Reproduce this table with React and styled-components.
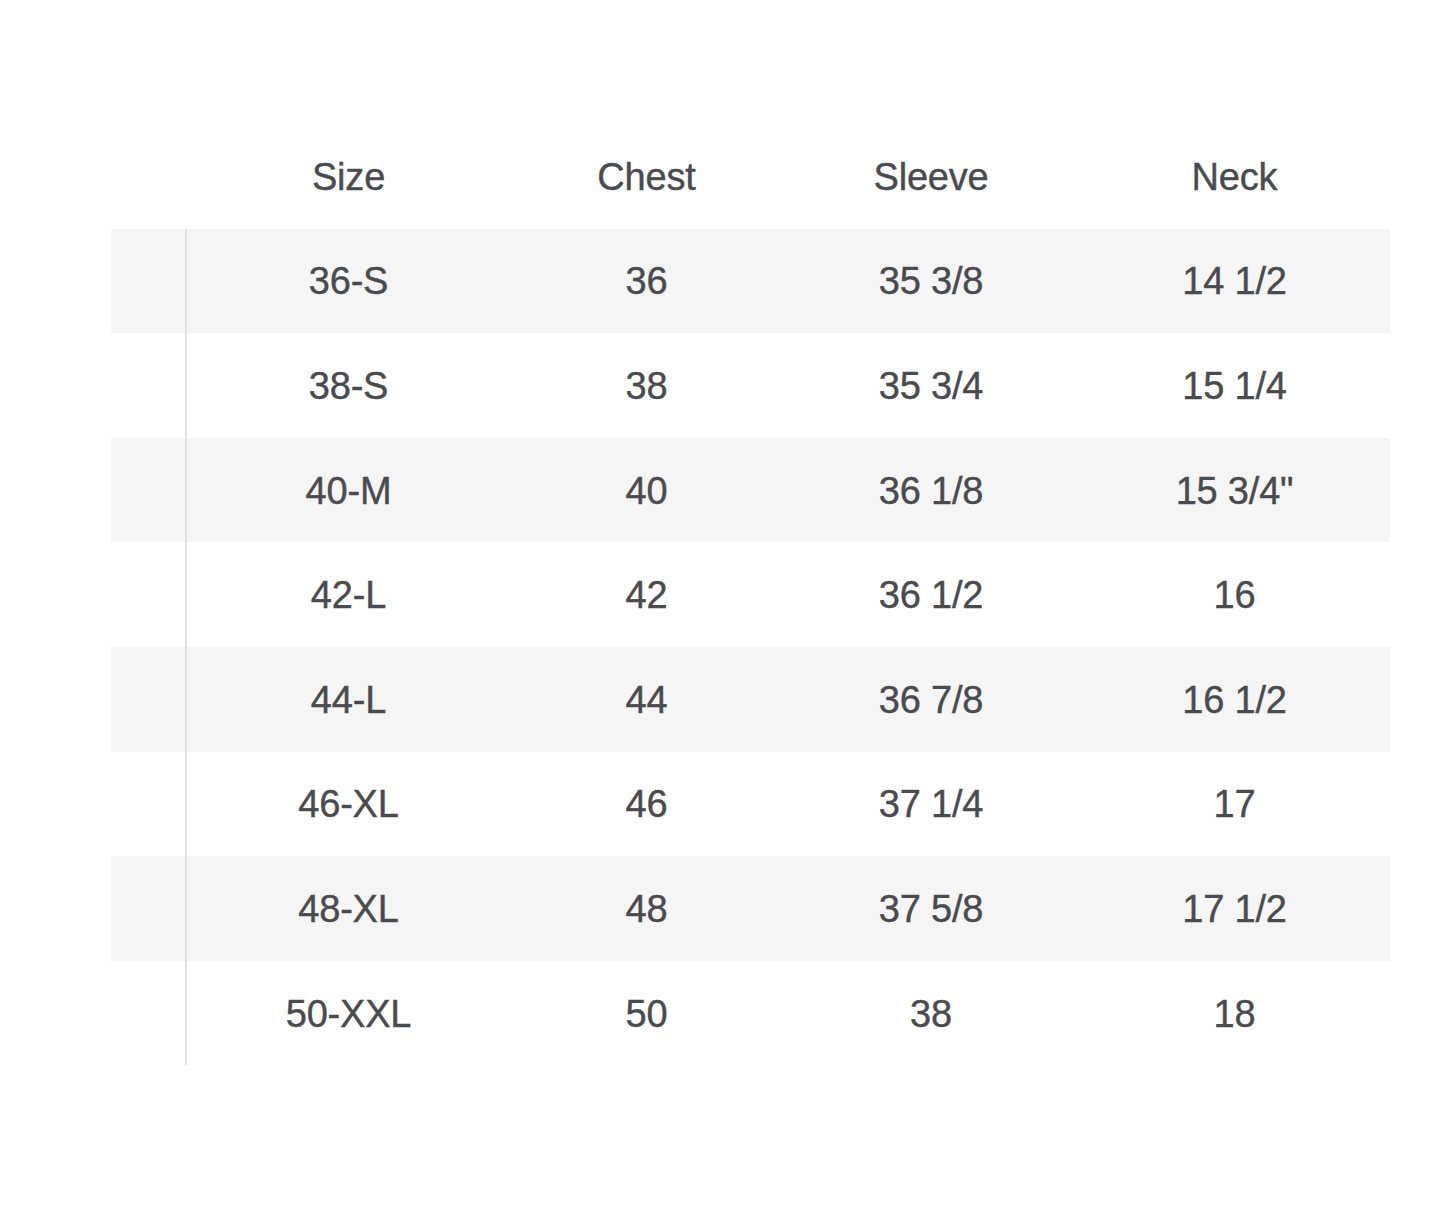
import styled, { createGlobalStyle } from 'styled-components';

const GlobalStyle = createGlobalStyle`
  body {
    margin: 0;
    background: #ffffff;
    font-family: "Liberation Sans", Arial, sans-serif;
  }
`;

const rows = [
  ['36-S', '36', '35 3/8', '14 1/2'],
  ['38-S', '38', '35 3/4', '15 1/4'],
  ['40-M', '40', '36 1/8', '15 3/4"'],
  ['42-L', '42', '36 1/2', '16'],
  ['44-L', '44', '36 7/8', '16 1/2'],
  ['46-XL', '46', '37 1/4', '17'],
  ['48-XL', '48', '37 5/8', '17 1/2'],
  ['50-XXL', '50', '38', '18'],
];

const Page = styled.div`
  width: 1440px;
  height: 1221px;
  padding: 124px 0 0 111px;
  box-sizing: border-box;
`;

const Table = styled.div`
  width: 1279px;
  display: flex;
  flex-direction: column;
`;

const Row = styled.div`
  display: grid;
  grid-template-columns: 76px 323px 273px 296px 311px;
  height: 104.6px;
  background: ${p => (p.$striped ? '#f5f5f5' : 'transparent')};
`;

const Gutter = styled.div`
  border-right: ${p => (p.$rule ? '2px solid #e2e2e2' : 'none')};
`;

const Cell = styled.div`
  display: flex;
  align-items: center;
  justify-content: center;
  font-size: 38px;
  color: #4a4b4f;
  letter-spacing: -0.2px;
  -webkit-text-stroke: 0.4px #4a4b4f;
  padding-top: 2px;
`;

export default function App() {
  return (
    <>
      <GlobalStyle />
      <Page>
        <Table>
          <Row>
            <Gutter />
            <Cell>Size</Cell>
            <Cell>Chest</Cell>
            <Cell>Sleeve</Cell>
            <Cell>Neck</Cell>
          </Row>
          {rows.map((r, i) => (
            <Row key={r[0]} $striped={i % 2 === 0}>
              <Gutter $rule />
              {r.map((v, j) => (
                <Cell key={j}>{v}</Cell>
              ))}
            </Row>
          ))}
        </Table>
      </Page>
    </>
  );
}
